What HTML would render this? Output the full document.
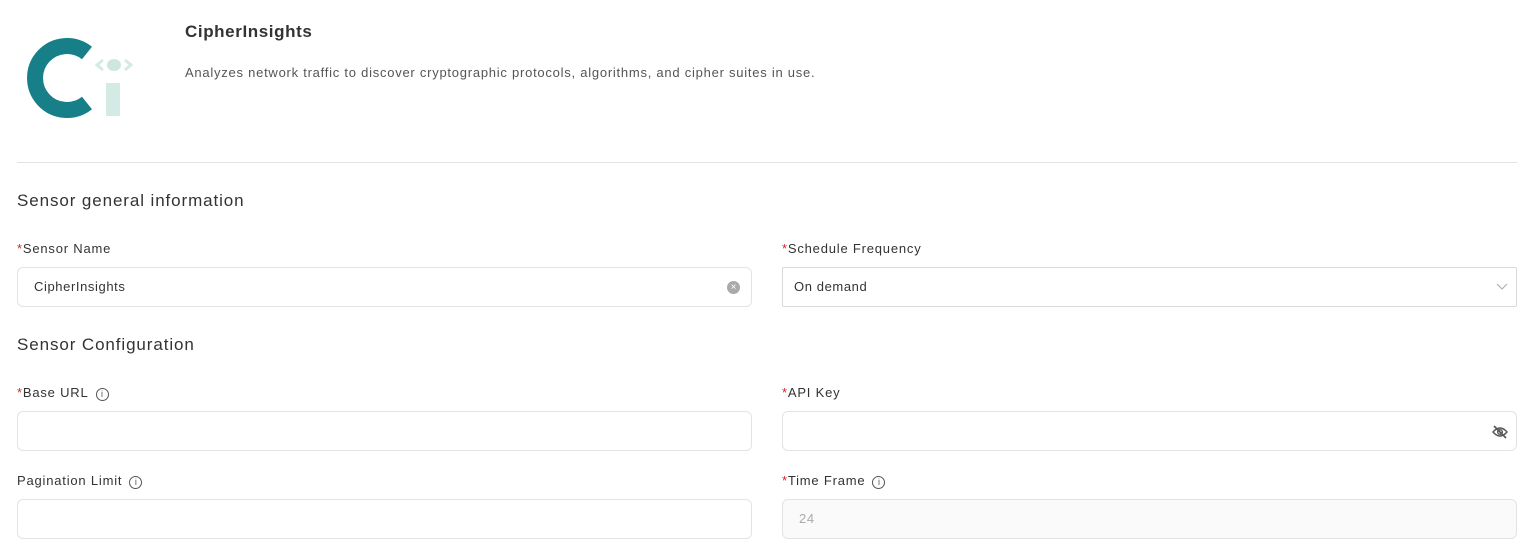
<!DOCTYPE html>
<html><head><meta charset="utf-8"><style>
body{margin:0;background:#fff;font-family:"Liberation Sans",sans-serif;color:#333;width:1531px;height:559px;overflow:hidden;position:relative}
.a{position:absolute}
.lbl{font-size:13px;color:#333;letter-spacing:0.8px}
.lbl b{color:#d4242b;font-weight:normal}
.in{position:absolute;height:40px;border:1px solid #e3e3e3;border-radius:6px;box-sizing:border-box;font-size:13px;line-height:38px;padding-left:16px;color:#333;letter-spacing:0.6px}
h2{position:absolute;margin:0;font-size:17px;font-weight:normal;color:#333;letter-spacing:0.9px}
.info{display:inline-block;width:11px;height:11px;border:1px solid #555;border-radius:50%;font-size:9px;line-height:11px;text-align:center;vertical-align:0px;margin-left:7px;color:#555;letter-spacing:0}
</style></head><body>
<svg class="a" style="left:15px;top:30px" width="130" height="95" viewBox="15 30 130 95">
<path d="M87 53 A32 32 0 1 0 87 103" fill="none" stroke="#167f88" stroke-width="16"/>
<rect x="106" y="83" width="14" height="33" fill="#d4ebe5"/>
<ellipse cx="114" cy="65" rx="7" ry="6" fill="#cfe6e0"/>
<path d="M103 60 L97 65 L103 70 M125 60 L131 65 L125 70" fill="none" stroke="#d4ebe5" stroke-width="3"/>
</svg>
<div class="a" style="left:185px;top:22px;font-size:17px;font-weight:bold;color:#333;letter-spacing:0.6px">CipherInsights</div>
<div class="a" style="left:185px;top:65px;font-size:13px;color:#555;letter-spacing:0.75px">Analyzes network traffic to discover cryptographic protocols, algorithms, and cipher suites in use.</div>
<div class="a" style="left:17px;top:162px;width:1500px;height:1px;background:#e3e3e3"></div>
<h2 style="left:17px;top:191px">Sensor general information</h2>
<div class="a lbl" style="left:17px;top:241px"><b>*</b>Sensor Name</div>
<div class="a lbl" style="left:782px;top:241px"><b>*</b>Schedule Frequency</div>
<div class="in" style="left:17px;top:267px;width:735px">CipherInsights<span class="a" style="right:11px;top:13px;width:13px;height:13px;border-radius:50%;background:#aaa;color:#fff;font-size:10px;line-height:13px;text-align:center;letter-spacing:0">×</span></div>
<div class="in" style="left:782px;top:267px;width:735px;border-color:#d9d9d9;border-radius:2px;padding-left:11px">On demand<svg class="a" style="right:8px;top:15px" width="12" height="8"><path d="M1 1 L6 6 L11 1" fill="none" stroke="#aaa"/></svg></div>
<h2 style="left:17px;top:335px">Sensor Configuration</h2>
<div class="a lbl" style="left:17px;top:385px"><b>*</b>Base URL<span class="info">i</span></div>
<div class="a lbl" style="left:782px;top:385px"><b>*</b>API Key</div>
<div class="in" style="left:17px;top:411px;width:735px"></div>
<div class="in" style="left:782px;top:411px;width:735px"><svg class="a" style="right:8px;top:13px" width="16" height="14" viewBox="0 0 16 14"><path d="M1 7 Q8 -1 15 7 Q8 15 1 7Z" fill="none" stroke="#555" stroke-width="1.4"/><circle cx="8" cy="7" r="2.3" fill="none" stroke="#555" stroke-width="1.4"/><path d="M2 1 L14 13" stroke="#555" stroke-width="1.6"/></svg></div>
<div class="a lbl" style="left:17px;top:473px">Pagination Limit<span class="info">i</span></div>
<div class="a lbl" style="left:782px;top:473px"><b>*</b>Time Frame<span class="info">i</span></div>
<div class="in" style="left:17px;top:499px;width:735px"></div>
<div class="in" style="left:782px;top:499px;width:735px;background:#fafafa;color:#aaa">24</div>
</body></html>
